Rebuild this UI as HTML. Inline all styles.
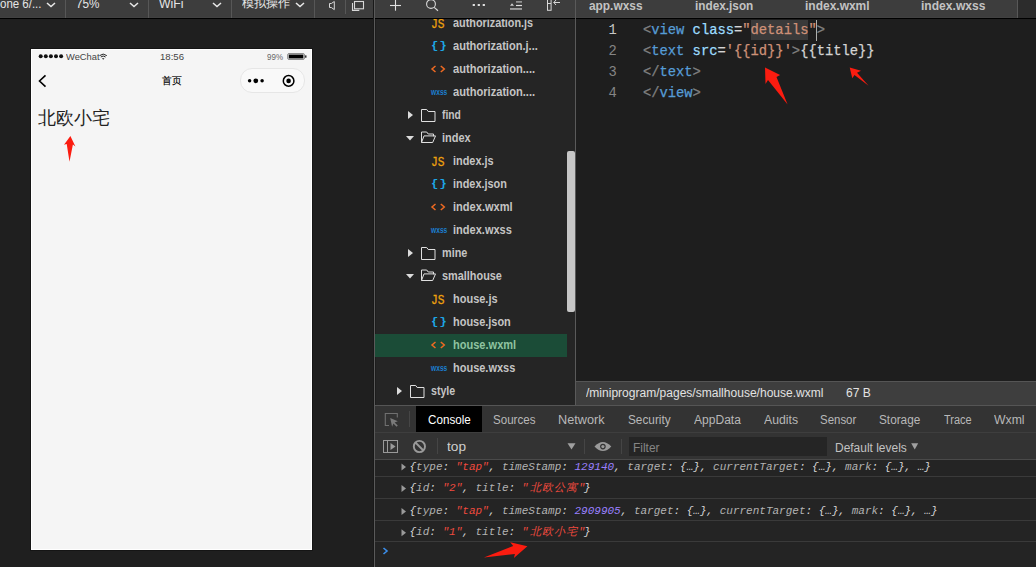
<!DOCTYPE html>
<html><head><meta charset="utf-8"><title>WeChat DevTools</title>
<style>
html,body{margin:0;padding:0;}
body{width:1036px;height:567px;overflow:hidden;position:relative;background:#1e1e1e;font-family:'Liberation Sans', sans-serif;}
svg{position:absolute;left:0;top:0;overflow:visible;}
</style></head><body>
<div style="position:absolute;left:0px;top:0px;width:374px;height:18px;background:#3d3d3d;"></div>
<div style="position:absolute;left:0px;top:17px;width:1036px;height:1px;background:#414141;"></div>
<div style="position:absolute;left:0px;top:18px;width:1036px;height:1px;background:#000000;"></div>
<div style="position:absolute;left:0px;top:19px;width:373px;height:548px;background:#1f1f1f;"></div>
<div style="position:absolute;left:373px;top:0px;width:1px;height:567px;background:#191919;"></div>
<div style="position:absolute;left:374px;top:0px;width:1px;height:567px;background:#5a5a5a;"></div>
<div style="position:absolute;left:375px;top:19px;width:1px;height:386px;background:#1d1d1d;"></div>
<div style="position:absolute;left:375px;top:0px;width:200px;height:17px;background:#3d3d3d;"></div>
<div style="position:absolute;left:376px;top:19px;width:199px;height:386px;background:#252525;"></div>
<div style="position:absolute;left:575px;top:0px;width:1px;height:405px;background:#5a5a5a;"></div>
<div style="position:absolute;left:576px;top:0px;width:441px;height:17px;background:#3d3d3d;"></div>
<div style="position:absolute;left:1017px;top:0px;width:1px;height:18px;background:#585858;"></div>
<div style="position:absolute;left:1018px;top:0px;width:18px;height:18px;background:#2c2c2c;"></div>
<div style="position:absolute;left:576px;top:19px;width:460px;height:362px;background:#1e1e1e;"></div>
<div style="position:absolute;left:576px;top:381px;width:460px;height:1px;background:#555555;"></div>
<div style="position:absolute;left:576px;top:382px;width:460px;height:23px;background:#3e3e3e;"></div>
<div style="position:absolute;left:375px;top:405px;width:661px;height:1px;background:#555555;"></div>
<div style="position:absolute;left:375px;top:406px;width:661px;height:26px;background:#333333;"></div>
<div style="position:absolute;left:416px;top:406px;width:66px;height:26px;background:#000000;"></div>
<div style="position:absolute;left:375px;top:432px;width:661px;height:1px;background:#3e3e3e;"></div>
<div style="position:absolute;left:375px;top:433px;width:661px;height:26px;background:#333333;"></div>
<div style="position:absolute;left:375px;top:459px;width:661px;height:1px;background:#4a4a4a;"></div>
<div style="position:absolute;left:375px;top:460px;width:661px;height:107px;background:#242424;"></div>
<div style="position:absolute;left:375px;top:476px;width:661px;height:1px;background:#3a3a3a;"></div>
<div style="position:absolute;left:375px;top:498px;width:661px;height:1px;background:#3a3a3a;"></div>
<div style="position:absolute;left:375px;top:520px;width:661px;height:1px;background:#3a3a3a;"></div>
<div style="position:absolute;left:375px;top:541px;width:661px;height:1px;background:#3a3a3a;"></div>
<div style="position:absolute;left:30px;top:48px;width:283px;height:503px;background:#151515;"></div>
<div style="position:absolute;left:31px;top:49px;width:281px;height:501px;background:#ffffff;"></div>
<div style="position:absolute;left:32px;top:50px;width:279px;height:499px;background:#f5f5f5;"></div>
<div style="position:absolute;left:65px;top:0px;width:1px;height:18px;background:#575757;"></div>
<div style="position:absolute;left:148px;top:0px;width:1px;height:18px;background:#575757;"></div>
<div style="position:absolute;left:231px;top:0px;width:1px;height:18px;background:#575757;"></div>
<div style="position:absolute;left:314px;top:0px;width:1px;height:18px;background:#575757;"></div>
<div style="position:absolute;left:345px;top:0px;width:1px;height:14px;background:#575757;"></div>
<div style="position:absolute;left:375px;top:334px;width:192px;height:23px;background:#1b4c37;"></div>
<div style="position:absolute;left:567px;top:151px;width:8px;height:161px;background:#c6c6c6;border-radius:2px;"></div>
<div style="position:absolute;left:750.5px;top:19.5px;width:57.9px;height:20.5px;background:#3a3a3a;"></div>
<div style="position:absolute;left:815.5px;top:19.5px;width:1.6px;height:21px;background:#aeafad;"></div>
<div style="position:absolute;left:409px;top:411px;width:1px;height:16px;background:#464646;"></div>
<div style="position:absolute;left:437px;top:438px;width:1px;height:16px;background:#454545;"></div>
<div style="position:absolute;left:584px;top:438.5px;width:1px;height:15.5px;background:#454545;"></div>
<div style="position:absolute;left:621px;top:438.5px;width:1px;height:15.5px;background:#454545;"></div>
<div style="position:absolute;left:629px;top:437px;width:198px;height:19px;background:#252525;"></div>
<div style="position:absolute;left:240px;top:68px;width:63px;height:23px;border:0.8px solid #e6e6e6;border-radius:12px;background:#f9f9f9;"></div>
<div style="position:absolute;left:-0.5px;top:-2.36px;line-height:12px;white-space:pre;color:#e6e6e6;font-family:'Liberation Sans', sans-serif;font-weight:normal;font-style:normal;font-size:12px;transform:scaleX(0.9568);transform-origin:0 0;">one 6/...</div>
<div style="position:absolute;left:76.3px;top:-2.36px;line-height:12px;white-space:pre;color:#e6e6e6;font-family:'Liberation Sans', sans-serif;font-weight:normal;font-style:normal;font-size:12px;transform:scaleX(0.9779);transform-origin:0 0;">75%</div>
<div style="position:absolute;left:159.3px;top:-2.36px;line-height:12px;white-space:pre;color:#e6e6e6;font-family:'Liberation Sans', sans-serif;font-weight:normal;font-style:normal;font-size:12px;transform:scaleX(1.0208);transform-origin:0 0;">WiFi</div>
<div style="position:absolute;left:241.5px;top:-2.86px;line-height:12px;white-space:pre;color:#e6e6e6;font-family:'Liberation Sans', sans-serif;font-weight:normal;font-style:normal;font-size:12px;transform:scaleX(1.0104);transform-origin:0 0;">模拟操作</div>
<div style="position:absolute;left:452.5px;top:16.00px;line-height:13px;white-space:pre;color:#c4c4c4;font-family:'Liberation Sans', sans-serif;font-weight:bold;font-style:normal;font-size:13px;transform:scaleX(0.8338);transform-origin:0 0;">authorization.js</div>
<div style="position:absolute;left:431.0px;top:18.25px;line-height:13.5px;white-space:pre;color:#eea20e;font-family:'Liberation Mono', monospace;font-weight:normal;font-style:normal;font-size:13.5px;transform:scaleX(0.8332);transform-origin:0 0;-webkit-text-stroke:0.3px #eea20e;">JS</div>
<div style="position:absolute;left:452.5px;top:39.00px;line-height:13px;white-space:pre;color:#c4c4c4;font-family:'Liberation Sans', sans-serif;font-weight:bold;font-style:normal;font-size:13px;transform:scaleX(0.8508);transform-origin:0 0;">authorization.j...</div>
<div style="position:absolute;left:430.8px;top:40.29px;line-height:11.5px;white-space:pre;color:#1da7e6;font-family:'Liberation Mono', monospace;font-weight:bold;font-style:normal;font-size:11.5px;transform:scaleX(1.0570);transform-origin:0 0;letter-spacing:1.2px;">{}</div>
<div style="position:absolute;left:452.5px;top:62.00px;line-height:13px;white-space:pre;color:#c4c4c4;font-family:'Liberation Sans', sans-serif;font-weight:bold;font-style:normal;font-size:13px;transform:scaleX(0.8547);transform-origin:0 0;">authorization....</div>
<div style="position:absolute;left:452.5px;top:85.00px;line-height:13px;white-space:pre;color:#c4c4c4;font-family:'Liberation Sans', sans-serif;font-weight:bold;font-style:normal;font-size:13px;transform:scaleX(0.8547);transform-origin:0 0;">authorization....</div>
<div style="position:absolute;left:430.8px;top:87.80px;line-height:8.5px;white-space:pre;color:#1b7fd1;font-family:'Liberation Sans', sans-serif;font-weight:bold;font-style:normal;font-size:8.5px;transform:scaleX(0.7838);transform-origin:0 0;">wxss</div>
<div style="position:absolute;left:441.5px;top:108.00px;line-height:13px;white-space:pre;color:#c4c4c4;font-family:'Liberation Sans', sans-serif;font-weight:bold;font-style:normal;font-size:13px;transform:scaleX(0.7932);transform-origin:0 0;">find</div>
<div style="position:absolute;left:441.5px;top:131.00px;line-height:13px;white-space:pre;color:#c4c4c4;font-family:'Liberation Sans', sans-serif;font-weight:bold;font-style:normal;font-size:13px;transform:scaleX(0.8449);transform-origin:0 0;">index</div>
<div style="position:absolute;left:452.5px;top:154.00px;line-height:13px;white-space:pre;color:#c4c4c4;font-family:'Liberation Sans', sans-serif;font-weight:bold;font-style:normal;font-size:13px;transform:scaleX(0.8385);transform-origin:0 0;">index.js</div>
<div style="position:absolute;left:431.0px;top:156.25px;line-height:13.5px;white-space:pre;color:#eea20e;font-family:'Liberation Mono', monospace;font-weight:normal;font-style:normal;font-size:13.5px;transform:scaleX(0.8332);transform-origin:0 0;-webkit-text-stroke:0.3px #eea20e;">JS</div>
<div style="position:absolute;left:452.5px;top:177.00px;line-height:13px;white-space:pre;color:#c4c4c4;font-family:'Liberation Sans', sans-serif;font-weight:bold;font-style:normal;font-size:13px;transform:scaleX(0.8383);transform-origin:0 0;">index.json</div>
<div style="position:absolute;left:430.8px;top:178.29px;line-height:11.5px;white-space:pre;color:#1da7e6;font-family:'Liberation Mono', monospace;font-weight:bold;font-style:normal;font-size:11.5px;transform:scaleX(1.0570);transform-origin:0 0;letter-spacing:1.2px;">{}</div>
<div style="position:absolute;left:452.5px;top:200.00px;line-height:13px;white-space:pre;color:#c4c4c4;font-family:'Liberation Sans', sans-serif;font-weight:bold;font-style:normal;font-size:13px;transform:scaleX(0.8505);transform-origin:0 0;">index.wxml</div>
<div style="position:absolute;left:452.5px;top:223.00px;line-height:13px;white-space:pre;color:#c4c4c4;font-family:'Liberation Sans', sans-serif;font-weight:bold;font-style:normal;font-size:13px;transform:scaleX(0.8490);transform-origin:0 0;">index.wxss</div>
<div style="position:absolute;left:430.8px;top:225.80px;line-height:8.5px;white-space:pre;color:#1b7fd1;font-family:'Liberation Sans', sans-serif;font-weight:bold;font-style:normal;font-size:8.5px;transform:scaleX(0.7838);transform-origin:0 0;">wxss</div>
<div style="position:absolute;left:441.5px;top:246.00px;line-height:13px;white-space:pre;color:#c4c4c4;font-family:'Liberation Sans', sans-serif;font-weight:bold;font-style:normal;font-size:13px;transform:scaleX(0.8338);transform-origin:0 0;">mine</div>
<div style="position:absolute;left:441.5px;top:269.00px;line-height:13px;white-space:pre;color:#c4c4c4;font-family:'Liberation Sans', sans-serif;font-weight:bold;font-style:normal;font-size:13px;transform:scaleX(0.8374);transform-origin:0 0;">smallhouse</div>
<div style="position:absolute;left:452.5px;top:292.00px;line-height:13px;white-space:pre;color:#c4c4c4;font-family:'Liberation Sans', sans-serif;font-weight:bold;font-style:normal;font-size:13px;transform:scaleX(0.8455);transform-origin:0 0;">house.js</div>
<div style="position:absolute;left:431.0px;top:294.25px;line-height:13.5px;white-space:pre;color:#eea20e;font-family:'Liberation Mono', monospace;font-weight:normal;font-style:normal;font-size:13.5px;transform:scaleX(0.8332);transform-origin:0 0;-webkit-text-stroke:0.3px #eea20e;">JS</div>
<div style="position:absolute;left:452.5px;top:315.00px;line-height:13px;white-space:pre;color:#c4c4c4;font-family:'Liberation Sans', sans-serif;font-weight:bold;font-style:normal;font-size:13px;transform:scaleX(0.8423);transform-origin:0 0;">house.json</div>
<div style="position:absolute;left:430.8px;top:316.29px;line-height:11.5px;white-space:pre;color:#1da7e6;font-family:'Liberation Mono', monospace;font-weight:bold;font-style:normal;font-size:11.5px;transform:scaleX(1.0570);transform-origin:0 0;letter-spacing:1.2px;">{}</div>
<div style="position:absolute;left:452.5px;top:338.00px;line-height:13px;white-space:pre;color:#8fc3a0;font-family:'Liberation Sans', sans-serif;font-weight:bold;font-style:normal;font-size:13px;transform:scaleX(0.8492);transform-origin:0 0;">house.wxml</div>
<div style="position:absolute;left:452.5px;top:361.00px;line-height:13px;white-space:pre;color:#c4c4c4;font-family:'Liberation Sans', sans-serif;font-weight:bold;font-style:normal;font-size:13px;transform:scaleX(0.8453);transform-origin:0 0;">house.wxss</div>
<div style="position:absolute;left:430.8px;top:363.80px;line-height:8.5px;white-space:pre;color:#1b7fd1;font-family:'Liberation Sans', sans-serif;font-weight:bold;font-style:normal;font-size:8.5px;transform:scaleX(0.7838);transform-origin:0 0;">wxss</div>
<div style="position:absolute;left:430.5px;top:384.00px;line-height:13px;white-space:pre;color:#c4c4c4;font-family:'Liberation Sans', sans-serif;font-weight:bold;font-style:normal;font-size:13px;transform:scaleX(0.8164);transform-origin:0 0;">style</div>
<div style="position:absolute;left:588.5px;top:-0.70px;line-height:13px;white-space:pre;color:#c3c3c3;font-family:'Liberation Sans', sans-serif;font-weight:bold;font-style:normal;font-size:13px;transform:scaleX(0.9140);transform-origin:0 0;">app.wxss</div>
<div style="position:absolute;left:695px;top:-0.70px;line-height:13px;white-space:pre;color:#c3c3c3;font-family:'Liberation Sans', sans-serif;font-weight:bold;font-style:normal;font-size:13px;transform:scaleX(0.9067);transform-origin:0 0;">index.json</div>
<div style="position:absolute;left:805.2px;top:-0.70px;line-height:13px;white-space:pre;color:#c3c3c3;font-family:'Liberation Sans', sans-serif;font-weight:bold;font-style:normal;font-size:13px;transform:scaleX(0.9218);transform-origin:0 0;">index.wxml</div>
<div style="position:absolute;left:921.4px;top:-0.70px;line-height:13px;white-space:pre;color:#c3c3c3;font-family:'Liberation Sans', sans-serif;font-weight:bold;font-style:normal;font-size:13px;transform:scaleX(0.9297);transform-origin:0 0;">index.wxss</div>
<div style="position:absolute;left:643px;top:24.42px;line-height:13.8px;white-space:pre;color:#808080;font-family:'Liberation Mono', monospace;font-weight:normal;font-style:normal;font-size:13.8px;-webkit-text-stroke:0.25px #808080;">&lt;</div>
<div style="position:absolute;left:651.27px;top:24.42px;line-height:13.8px;white-space:pre;color:#569cd6;font-family:'Liberation Mono', monospace;font-weight:normal;font-style:normal;font-size:13.8px;-webkit-text-stroke:0.25px #569cd6;">view</div>
<div style="position:absolute;left:684.35px;top:24.42px;line-height:13.8px;white-space:pre;color:#d4d4d4;font-family:'Liberation Mono', monospace;font-weight:normal;font-style:normal;font-size:13.8px;-webkit-text-stroke:0.25px #d4d4d4;"> </div>
<div style="position:absolute;left:692.62px;top:24.42px;line-height:13.8px;white-space:pre;color:#9cdcfe;font-family:'Liberation Mono', monospace;font-weight:normal;font-style:normal;font-size:13.8px;-webkit-text-stroke:0.25px #9cdcfe;">class</div>
<div style="position:absolute;left:733.97px;top:24.42px;line-height:13.8px;white-space:pre;color:#d4d4d4;font-family:'Liberation Mono', monospace;font-weight:normal;font-style:normal;font-size:13.8px;-webkit-text-stroke:0.25px #d4d4d4;">=</div>
<div style="position:absolute;left:742.24px;top:24.42px;line-height:13.8px;white-space:pre;color:#ce9178;font-family:'Liberation Mono', monospace;font-weight:normal;font-style:normal;font-size:13.8px;-webkit-text-stroke:0.25px #ce9178;">&quot;details&quot;</div>
<div style="position:absolute;left:816.67px;top:24.42px;line-height:13.8px;white-space:pre;color:#808080;font-family:'Liberation Mono', monospace;font-weight:normal;font-style:normal;font-size:13.8px;-webkit-text-stroke:0.25px #808080;">&gt;</div>
<div style="position:absolute;left:643px;top:45.42px;line-height:13.8px;white-space:pre;color:#808080;font-family:'Liberation Mono', monospace;font-weight:normal;font-style:normal;font-size:13.8px;-webkit-text-stroke:0.25px #808080;">&lt;</div>
<div style="position:absolute;left:651.27px;top:45.42px;line-height:13.8px;white-space:pre;color:#569cd6;font-family:'Liberation Mono', monospace;font-weight:normal;font-style:normal;font-size:13.8px;-webkit-text-stroke:0.25px #569cd6;">text</div>
<div style="position:absolute;left:684.35px;top:45.42px;line-height:13.8px;white-space:pre;color:#d4d4d4;font-family:'Liberation Mono', monospace;font-weight:normal;font-style:normal;font-size:13.8px;-webkit-text-stroke:0.25px #d4d4d4;"> </div>
<div style="position:absolute;left:692.62px;top:45.42px;line-height:13.8px;white-space:pre;color:#9cdcfe;font-family:'Liberation Mono', monospace;font-weight:normal;font-style:normal;font-size:13.8px;-webkit-text-stroke:0.25px #9cdcfe;">src</div>
<div style="position:absolute;left:717.43px;top:45.42px;line-height:13.8px;white-space:pre;color:#d4d4d4;font-family:'Liberation Mono', monospace;font-weight:normal;font-style:normal;font-size:13.8px;-webkit-text-stroke:0.25px #d4d4d4;">=</div>
<div style="position:absolute;left:725.6999999999999px;top:45.42px;line-height:13.8px;white-space:pre;color:#ce9178;font-family:'Liberation Mono', monospace;font-weight:normal;font-style:normal;font-size:13.8px;-webkit-text-stroke:0.25px #ce9178;">&#x27;{{id}}&#x27;</div>
<div style="position:absolute;left:791.8599999999999px;top:45.42px;line-height:13.8px;white-space:pre;color:#808080;font-family:'Liberation Mono', monospace;font-weight:normal;font-style:normal;font-size:13.8px;-webkit-text-stroke:0.25px #808080;">&gt;</div>
<div style="position:absolute;left:800.1299999999999px;top:45.42px;line-height:13.8px;white-space:pre;color:#d4d4d4;font-family:'Liberation Mono', monospace;font-weight:normal;font-style:normal;font-size:13.8px;-webkit-text-stroke:0.25px #d4d4d4;">{{title}}</div>
<div style="position:absolute;left:643px;top:66.42px;line-height:13.8px;white-space:pre;color:#808080;font-family:'Liberation Mono', monospace;font-weight:normal;font-style:normal;font-size:13.8px;-webkit-text-stroke:0.25px #808080;">&lt;/</div>
<div style="position:absolute;left:659.54px;top:66.42px;line-height:13.8px;white-space:pre;color:#569cd6;font-family:'Liberation Mono', monospace;font-weight:normal;font-style:normal;font-size:13.8px;-webkit-text-stroke:0.25px #569cd6;">text</div>
<div style="position:absolute;left:692.62px;top:66.42px;line-height:13.8px;white-space:pre;color:#808080;font-family:'Liberation Mono', monospace;font-weight:normal;font-style:normal;font-size:13.8px;-webkit-text-stroke:0.25px #808080;">&gt;</div>
<div style="position:absolute;left:643px;top:87.42px;line-height:13.8px;white-space:pre;color:#808080;font-family:'Liberation Mono', monospace;font-weight:normal;font-style:normal;font-size:13.8px;-webkit-text-stroke:0.25px #808080;">&lt;/</div>
<div style="position:absolute;left:659.54px;top:87.42px;line-height:13.8px;white-space:pre;color:#569cd6;font-family:'Liberation Mono', monospace;font-weight:normal;font-style:normal;font-size:13.8px;-webkit-text-stroke:0.25px #569cd6;">view</div>
<div style="position:absolute;left:692.62px;top:87.42px;line-height:13.8px;white-space:pre;color:#808080;font-family:'Liberation Mono', monospace;font-weight:normal;font-style:normal;font-size:13.8px;-webkit-text-stroke:0.25px #808080;">&gt;</div>
<div style="position:absolute;left:608.5px;top:24.42px;line-height:13.8px;white-space:pre;color:#c6c6c6;font-family:'Liberation Mono', monospace;font-weight:normal;font-style:normal;font-size:13.8px;">1</div>
<div style="position:absolute;left:608.5px;top:45.42px;line-height:13.8px;white-space:pre;color:#858585;font-family:'Liberation Mono', monospace;font-weight:normal;font-style:normal;font-size:13.8px;">2</div>
<div style="position:absolute;left:608.5px;top:66.42px;line-height:13.8px;white-space:pre;color:#858585;font-family:'Liberation Mono', monospace;font-weight:normal;font-style:normal;font-size:13.8px;">3</div>
<div style="position:absolute;left:608.5px;top:87.42px;line-height:13.8px;white-space:pre;color:#858585;font-family:'Liberation Mono', monospace;font-weight:normal;font-style:normal;font-size:13.8px;">4</div>
<div style="position:absolute;left:585.5px;top:386.84px;line-height:12px;white-space:pre;color:#e2e2e2;font-family:'Liberation Sans', sans-serif;font-weight:normal;font-style:normal;font-size:12px;transform:scaleX(1.0030);transform-origin:0 0;">/miniprogram/pages/smallhouse/house.wxml</div>
<div style="position:absolute;left:846.2px;top:386.84px;line-height:12px;white-space:pre;color:#e2e2e2;font-family:'Liberation Sans', sans-serif;font-weight:normal;font-style:normal;font-size:12px;transform:scaleX(1.0046);transform-origin:0 0;">67 B</div>
<div style="position:absolute;left:427.5px;top:414.42px;line-height:12.5px;white-space:pre;color:#ffffff;font-family:'Liberation Sans', sans-serif;font-weight:normal;font-style:normal;font-size:12.5px;transform:scaleX(0.9330);transform-origin:0 0;">Console</div>
<div style="position:absolute;left:493.0px;top:414.42px;line-height:12.5px;white-space:pre;color:#b8b8b8;font-family:'Liberation Sans', sans-serif;font-weight:normal;font-style:normal;font-size:12.5px;transform:scaleX(0.9267);transform-origin:0 0;">Sources</div>
<div style="position:absolute;left:558.0px;top:414.42px;line-height:12.5px;white-space:pre;color:#b8b8b8;font-family:'Liberation Sans', sans-serif;font-weight:normal;font-style:normal;font-size:12.5px;transform:scaleX(1.0143);transform-origin:0 0;">Network</div>
<div style="position:absolute;left:627.5px;top:414.42px;line-height:12.5px;white-space:pre;color:#b8b8b8;font-family:'Liberation Sans', sans-serif;font-weight:normal;font-style:normal;font-size:12.5px;transform:scaleX(0.9434);transform-origin:0 0;">Security</div>
<div style="position:absolute;left:693.5px;top:414.42px;line-height:12.5px;white-space:pre;color:#b8b8b8;font-family:'Liberation Sans', sans-serif;font-weight:normal;font-style:normal;font-size:12.5px;transform:scaleX(0.9639);transform-origin:0 0;">AppData</div>
<div style="position:absolute;left:763.5px;top:414.42px;line-height:12.5px;white-space:pre;color:#b8b8b8;font-family:'Liberation Sans', sans-serif;font-weight:normal;font-style:normal;font-size:12.5px;transform:scaleX(0.9784);transform-origin:0 0;">Audits</div>
<div style="position:absolute;left:820.1px;top:414.42px;line-height:12.5px;white-space:pre;color:#b8b8b8;font-family:'Liberation Sans', sans-serif;font-weight:normal;font-style:normal;font-size:12.5px;transform:scaleX(0.9164);transform-origin:0 0;">Sensor</div>
<div style="position:absolute;left:879.4px;top:414.42px;line-height:12.5px;white-space:pre;color:#b8b8b8;font-family:'Liberation Sans', sans-serif;font-weight:normal;font-style:normal;font-size:12.5px;transform:scaleX(0.9433);transform-origin:0 0;">Storage</div>
<div style="position:absolute;left:943.9px;top:414.42px;line-height:12.5px;white-space:pre;color:#b8b8b8;font-family:'Liberation Sans', sans-serif;font-weight:normal;font-style:normal;font-size:12.5px;transform:scaleX(0.8762);transform-origin:0 0;">Trace</div>
<div style="position:absolute;left:994.3px;top:414.42px;line-height:12.5px;white-space:pre;color:#b8b8b8;font-family:'Liberation Sans', sans-serif;font-weight:normal;font-style:normal;font-size:12.5px;transform:scaleX(0.9792);transform-origin:0 0;">Wxml</div>
<div style="position:absolute;left:446.5px;top:441.22px;line-height:12.5px;white-space:pre;color:#cfcfcf;font-family:'Liberation Sans', sans-serif;font-weight:normal;font-style:normal;font-size:12.5px;transform:scaleX(1.0925);transform-origin:0 0;">top</div>
<div style="position:absolute;left:633px;top:441.72px;line-height:12.5px;white-space:pre;color:#858585;font-family:'Liberation Sans', sans-serif;font-weight:normal;font-style:normal;font-size:12.5px;transform:scaleX(0.9539);transform-origin:0 0;">Filter</div>
<div style="position:absolute;left:835px;top:441.62px;line-height:12.5px;white-space:pre;color:#c2c2c2;font-family:'Liberation Sans', sans-serif;font-weight:normal;font-style:normal;font-size:12.5px;transform:scaleX(0.9567);transform-origin:0 0;">Default levels</div>
<div style="position:absolute;left:409.5px;top:461.57px;line-height:11px;white-space:pre;color:#d6d6d6;font-family:'Liberation Mono', monospace;font-weight:normal;font-style:italic;font-size:11px;">{</div>
<div style="position:absolute;left:416.1px;top:461.57px;line-height:11px;white-space:pre;color:#b3b3b3;font-family:'Liberation Mono', monospace;font-weight:normal;font-style:italic;font-size:11px;">type</div>
<div style="position:absolute;left:442.5px;top:461.57px;line-height:11px;white-space:pre;color:#d6d6d6;font-family:'Liberation Mono', monospace;font-weight:normal;font-style:italic;font-size:11px;">: </div>
<div style="position:absolute;left:455.7px;top:461.57px;line-height:11px;white-space:pre;color:#ef4a3e;font-family:'Liberation Mono', monospace;font-weight:normal;font-style:italic;font-size:11px;">&quot;tap&quot;</div>
<div style="position:absolute;left:488.7px;top:461.57px;line-height:11px;white-space:pre;color:#d6d6d6;font-family:'Liberation Mono', monospace;font-weight:normal;font-style:italic;font-size:11px;">, </div>
<div style="position:absolute;left:501.9px;top:461.57px;line-height:11px;white-space:pre;color:#b3b3b3;font-family:'Liberation Mono', monospace;font-weight:normal;font-style:italic;font-size:11px;">timeStamp</div>
<div style="position:absolute;left:561.3px;top:461.57px;line-height:11px;white-space:pre;color:#d6d6d6;font-family:'Liberation Mono', monospace;font-weight:normal;font-style:italic;font-size:11px;">: </div>
<div style="position:absolute;left:574.5px;top:461.57px;line-height:11px;white-space:pre;color:#9a80ff;font-family:'Liberation Mono', monospace;font-weight:normal;font-style:italic;font-size:11px;">129140</div>
<div style="position:absolute;left:614.1px;top:461.57px;line-height:11px;white-space:pre;color:#d6d6d6;font-family:'Liberation Mono', monospace;font-weight:normal;font-style:italic;font-size:11px;">, </div>
<div style="position:absolute;left:627.3000000000001px;top:461.57px;line-height:11px;white-space:pre;color:#b3b3b3;font-family:'Liberation Mono', monospace;font-weight:normal;font-style:italic;font-size:11px;">target</div>
<div style="position:absolute;left:666.9000000000001px;top:461.57px;line-height:11px;white-space:pre;color:#d6d6d6;font-family:'Liberation Mono', monospace;font-weight:normal;font-style:italic;font-size:11px;">: </div>
<div style="position:absolute;left:680.1000000000001px;top:461.57px;line-height:11px;white-space:pre;color:#d6d6d6;font-family:'Liberation Mono', monospace;font-weight:normal;font-style:italic;font-size:11px;">{…}</div>
<div style="position:absolute;left:699.9000000000001px;top:461.57px;line-height:11px;white-space:pre;color:#d6d6d6;font-family:'Liberation Mono', monospace;font-weight:normal;font-style:italic;font-size:11px;">, </div>
<div style="position:absolute;left:713.1000000000001px;top:461.57px;line-height:11px;white-space:pre;color:#b3b3b3;font-family:'Liberation Mono', monospace;font-weight:normal;font-style:italic;font-size:11px;">currentTarget</div>
<div style="position:absolute;left:798.9000000000001px;top:461.57px;line-height:11px;white-space:pre;color:#d6d6d6;font-family:'Liberation Mono', monospace;font-weight:normal;font-style:italic;font-size:11px;">: </div>
<div style="position:absolute;left:812.1000000000001px;top:461.57px;line-height:11px;white-space:pre;color:#d6d6d6;font-family:'Liberation Mono', monospace;font-weight:normal;font-style:italic;font-size:11px;">{…}</div>
<div style="position:absolute;left:831.9000000000001px;top:461.57px;line-height:11px;white-space:pre;color:#d6d6d6;font-family:'Liberation Mono', monospace;font-weight:normal;font-style:italic;font-size:11px;">, </div>
<div style="position:absolute;left:845.1000000000001px;top:461.57px;line-height:11px;white-space:pre;color:#b3b3b3;font-family:'Liberation Mono', monospace;font-weight:normal;font-style:italic;font-size:11px;">mark</div>
<div style="position:absolute;left:871.5000000000001px;top:461.57px;line-height:11px;white-space:pre;color:#d6d6d6;font-family:'Liberation Mono', monospace;font-weight:normal;font-style:italic;font-size:11px;">: </div>
<div style="position:absolute;left:884.7000000000002px;top:461.57px;line-height:11px;white-space:pre;color:#d6d6d6;font-family:'Liberation Mono', monospace;font-weight:normal;font-style:italic;font-size:11px;">{…}</div>
<div style="position:absolute;left:904.5000000000001px;top:461.57px;line-height:11px;white-space:pre;color:#d6d6d6;font-family:'Liberation Mono', monospace;font-weight:normal;font-style:italic;font-size:11px;">, …}</div>
<div style="position:absolute;left:409.5px;top:483.07px;line-height:11px;white-space:pre;color:#d6d6d6;font-family:'Liberation Mono', monospace;font-weight:normal;font-style:italic;font-size:11px;">{</div>
<div style="position:absolute;left:416.1px;top:483.07px;line-height:11px;white-space:pre;color:#b3b3b3;font-family:'Liberation Mono', monospace;font-weight:normal;font-style:italic;font-size:11px;">id</div>
<div style="position:absolute;left:429.3px;top:483.07px;line-height:11px;white-space:pre;color:#d6d6d6;font-family:'Liberation Mono', monospace;font-weight:normal;font-style:italic;font-size:11px;">: </div>
<div style="position:absolute;left:442.5px;top:483.07px;line-height:11px;white-space:pre;color:#ef4a3e;font-family:'Liberation Mono', monospace;font-weight:normal;font-style:italic;font-size:11px;">&quot;2&quot;</div>
<div style="position:absolute;left:462.3px;top:483.07px;line-height:11px;white-space:pre;color:#d6d6d6;font-family:'Liberation Mono', monospace;font-weight:normal;font-style:italic;font-size:11px;">, </div>
<div style="position:absolute;left:475.5px;top:483.07px;line-height:11px;white-space:pre;color:#b3b3b3;font-family:'Liberation Mono', monospace;font-weight:normal;font-style:italic;font-size:11px;">title</div>
<div style="position:absolute;left:508.5px;top:483.07px;line-height:11px;white-space:pre;color:#d6d6d6;font-family:'Liberation Mono', monospace;font-weight:normal;font-style:italic;font-size:11px;">: </div>
<div style="position:absolute;left:521.7px;top:483.07px;line-height:11px;white-space:pre;color:#ef4a3e;font-family:'Liberation Mono', monospace;font-weight:normal;font-style:italic;font-size:11px;letter-spacing:1.25px;">&quot;北欧公寓&quot;</div>
<div style="position:absolute;left:583.9000000000001px;top:483.07px;line-height:11px;white-space:pre;color:#d6d6d6;font-family:'Liberation Mono', monospace;font-weight:normal;font-style:italic;font-size:11px;">}</div>
<div style="position:absolute;left:409.5px;top:506.07px;line-height:11px;white-space:pre;color:#d6d6d6;font-family:'Liberation Mono', monospace;font-weight:normal;font-style:italic;font-size:11px;">{</div>
<div style="position:absolute;left:416.1px;top:506.07px;line-height:11px;white-space:pre;color:#b3b3b3;font-family:'Liberation Mono', monospace;font-weight:normal;font-style:italic;font-size:11px;">type</div>
<div style="position:absolute;left:442.5px;top:506.07px;line-height:11px;white-space:pre;color:#d6d6d6;font-family:'Liberation Mono', monospace;font-weight:normal;font-style:italic;font-size:11px;">: </div>
<div style="position:absolute;left:455.7px;top:506.07px;line-height:11px;white-space:pre;color:#ef4a3e;font-family:'Liberation Mono', monospace;font-weight:normal;font-style:italic;font-size:11px;">&quot;tap&quot;</div>
<div style="position:absolute;left:488.7px;top:506.07px;line-height:11px;white-space:pre;color:#d6d6d6;font-family:'Liberation Mono', monospace;font-weight:normal;font-style:italic;font-size:11px;">, </div>
<div style="position:absolute;left:501.9px;top:506.07px;line-height:11px;white-space:pre;color:#b3b3b3;font-family:'Liberation Mono', monospace;font-weight:normal;font-style:italic;font-size:11px;">timeStamp</div>
<div style="position:absolute;left:561.3px;top:506.07px;line-height:11px;white-space:pre;color:#d6d6d6;font-family:'Liberation Mono', monospace;font-weight:normal;font-style:italic;font-size:11px;">: </div>
<div style="position:absolute;left:574.5px;top:506.07px;line-height:11px;white-space:pre;color:#9a80ff;font-family:'Liberation Mono', monospace;font-weight:normal;font-style:italic;font-size:11px;">2909905</div>
<div style="position:absolute;left:620.7px;top:506.07px;line-height:11px;white-space:pre;color:#d6d6d6;font-family:'Liberation Mono', monospace;font-weight:normal;font-style:italic;font-size:11px;">, </div>
<div style="position:absolute;left:633.9000000000001px;top:506.07px;line-height:11px;white-space:pre;color:#b3b3b3;font-family:'Liberation Mono', monospace;font-weight:normal;font-style:italic;font-size:11px;">target</div>
<div style="position:absolute;left:673.5000000000001px;top:506.07px;line-height:11px;white-space:pre;color:#d6d6d6;font-family:'Liberation Mono', monospace;font-weight:normal;font-style:italic;font-size:11px;">: </div>
<div style="position:absolute;left:686.7000000000002px;top:506.07px;line-height:11px;white-space:pre;color:#d6d6d6;font-family:'Liberation Mono', monospace;font-weight:normal;font-style:italic;font-size:11px;">{…}</div>
<div style="position:absolute;left:706.5000000000001px;top:506.07px;line-height:11px;white-space:pre;color:#d6d6d6;font-family:'Liberation Mono', monospace;font-weight:normal;font-style:italic;font-size:11px;">, </div>
<div style="position:absolute;left:719.7000000000002px;top:506.07px;line-height:11px;white-space:pre;color:#b3b3b3;font-family:'Liberation Mono', monospace;font-weight:normal;font-style:italic;font-size:11px;">currentTarget</div>
<div style="position:absolute;left:805.5000000000001px;top:506.07px;line-height:11px;white-space:pre;color:#d6d6d6;font-family:'Liberation Mono', monospace;font-weight:normal;font-style:italic;font-size:11px;">: </div>
<div style="position:absolute;left:818.7000000000002px;top:506.07px;line-height:11px;white-space:pre;color:#d6d6d6;font-family:'Liberation Mono', monospace;font-weight:normal;font-style:italic;font-size:11px;">{…}</div>
<div style="position:absolute;left:838.5000000000001px;top:506.07px;line-height:11px;white-space:pre;color:#d6d6d6;font-family:'Liberation Mono', monospace;font-weight:normal;font-style:italic;font-size:11px;">, </div>
<div style="position:absolute;left:851.7000000000002px;top:506.07px;line-height:11px;white-space:pre;color:#b3b3b3;font-family:'Liberation Mono', monospace;font-weight:normal;font-style:italic;font-size:11px;">mark</div>
<div style="position:absolute;left:878.1000000000001px;top:506.07px;line-height:11px;white-space:pre;color:#d6d6d6;font-family:'Liberation Mono', monospace;font-weight:normal;font-style:italic;font-size:11px;">: </div>
<div style="position:absolute;left:891.3000000000002px;top:506.07px;line-height:11px;white-space:pre;color:#d6d6d6;font-family:'Liberation Mono', monospace;font-weight:normal;font-style:italic;font-size:11px;">{…}</div>
<div style="position:absolute;left:911.1000000000001px;top:506.07px;line-height:11px;white-space:pre;color:#d6d6d6;font-family:'Liberation Mono', monospace;font-weight:normal;font-style:italic;font-size:11px;">, …}</div>
<div style="position:absolute;left:409.5px;top:527.37px;line-height:11px;white-space:pre;color:#d6d6d6;font-family:'Liberation Mono', monospace;font-weight:normal;font-style:italic;font-size:11px;">{</div>
<div style="position:absolute;left:416.1px;top:527.37px;line-height:11px;white-space:pre;color:#b3b3b3;font-family:'Liberation Mono', monospace;font-weight:normal;font-style:italic;font-size:11px;">id</div>
<div style="position:absolute;left:429.3px;top:527.37px;line-height:11px;white-space:pre;color:#d6d6d6;font-family:'Liberation Mono', monospace;font-weight:normal;font-style:italic;font-size:11px;">: </div>
<div style="position:absolute;left:442.5px;top:527.37px;line-height:11px;white-space:pre;color:#ef4a3e;font-family:'Liberation Mono', monospace;font-weight:normal;font-style:italic;font-size:11px;">&quot;1&quot;</div>
<div style="position:absolute;left:462.3px;top:527.37px;line-height:11px;white-space:pre;color:#d6d6d6;font-family:'Liberation Mono', monospace;font-weight:normal;font-style:italic;font-size:11px;">, </div>
<div style="position:absolute;left:475.5px;top:527.37px;line-height:11px;white-space:pre;color:#b3b3b3;font-family:'Liberation Mono', monospace;font-weight:normal;font-style:italic;font-size:11px;">title</div>
<div style="position:absolute;left:508.5px;top:527.37px;line-height:11px;white-space:pre;color:#d6d6d6;font-family:'Liberation Mono', monospace;font-weight:normal;font-style:italic;font-size:11px;">: </div>
<div style="position:absolute;left:521.7px;top:527.37px;line-height:11px;white-space:pre;color:#ef4a3e;font-family:'Liberation Mono', monospace;font-weight:normal;font-style:italic;font-size:11px;letter-spacing:1.25px;">&quot;北欧小宅&quot;</div>
<div style="position:absolute;left:583.9000000000001px;top:527.37px;line-height:11px;white-space:pre;color:#d6d6d6;font-family:'Liberation Mono', monospace;font-weight:normal;font-style:italic;font-size:11px;">}</div>
<div style="position:absolute;left:66px;top:51.56px;line-height:9.5px;white-space:pre;color:#444444;font-family:'Liberation Sans', sans-serif;font-weight:normal;font-style:normal;font-size:9.5px;transform:scaleX(0.9808);transform-origin:0 0;">WeChat</div>
<div style="position:absolute;left:160px;top:51.96px;line-height:9.5px;white-space:pre;color:#444444;font-family:'Liberation Sans', sans-serif;font-weight:normal;font-style:normal;font-size:9.5px;transform:scaleX(1.0092);transform-origin:0 0;">18:56</div>
<div style="position:absolute;left:267.2px;top:52.50px;line-height:8.5px;white-space:pre;color:#666666;font-family:'Liberation Sans', sans-serif;font-weight:normal;font-style:normal;font-size:8.5px;transform:scaleX(0.9403);transform-origin:0 0;">99%</div>
<div style="position:absolute;left:161.5px;top:76.03px;line-height:10px;white-space:pre;color:#000000;font-family:'Liberation Sans', sans-serif;font-weight:normal;font-style:normal;font-size:10px;transform:scaleX(0.9750);transform-origin:0 0;-webkit-text-stroke:0.15px #000;">首页</div>
<div style="position:absolute;left:38.3px;top:109.06px;line-height:18px;white-space:pre;color:#222222;font-family:'Liberation Sans', sans-serif;font-weight:normal;font-style:normal;font-size:18px;transform:scaleX(1.0000);transform-origin:0 0;">北欧小宅</div>
<div style="position:absolute;left:375px;top:0;width:200px;height:17px;background:#3d3d3d"></div><div style="position:absolute;left:375px;top:17px;width:200px;height:1px;background:#414141"></div><div style="position:absolute;left:375px;top:18px;width:200px;height:1px;background:#000"></div>
<svg width="1036" height="567" viewBox="0 0 1036 567"><polyline points="47,3 51,6.6 55,3" fill="none" stroke="#e8e8e8" stroke-width="1.5"/><polyline points="130,3 134,6.6 138,3" fill="none" stroke="#e8e8e8" stroke-width="1.5"/><polyline points="213,3 217,6.6 221,3" fill="none" stroke="#e8e8e8" stroke-width="1.5"/><polyline points="296,3 300,6.6 304,3" fill="none" stroke="#e8e8e8" stroke-width="1.5"/><polygon points="329.5,3.5 331.3,3.5 334.3,1.5 334.3,9.6 331.3,7.5 329.5,7.5" fill="none" stroke="#d8d8d8" stroke-width="1"/><rect x="354.5" y="1.5" width="9" height="7.3" fill="none" stroke="#d8d8d8" stroke-width="1.1"/><polyline points="352.5,3 352.5,10.4 359.3,10.4" fill="none" stroke="#d8d8d8" stroke-width="1.1"/><line x1="390" y1="5.5" x2="401" y2="5.5" stroke="#e0e0e0" stroke-width="1.1"/><line x1="395.5" y1="0" x2="395.5" y2="10.7" stroke="#e0e0e0" stroke-width="1.1"/><circle cx="431" cy="4" r="4.4" fill="none" stroke="#d8d8d8" stroke-width="1.1"/><line x1="434.2" y1="7.4" x2="438" y2="10.7" stroke="#d8d8d8" stroke-width="1.2"/><rect x="472.7" y="4" width="2.2" height="2" fill="#e0e0e0"/><rect x="477.7" y="4" width="2.2" height="2" fill="#e0e0e0"/><rect x="482.7" y="4" width="2.2" height="2" fill="#e0e0e0"/><polygon points="510,5.8 512,3.2 514,5.8" fill="#d0d0d0"/><rect x="516" y="1.2" width="6" height="1.4" fill="#a8a8a8"/><rect x="516" y="4.9" width="6" height="1.2" fill="#e0e0e0"/><rect x="510" y="8.1" width="12" height="1.7" fill="#a8a8a8"/><rect x="547.5" y="-1" width="3.6" height="11.3" fill="none" stroke="#d8d8d8" stroke-width="1"/><line x1="547.5" y1="3.5" x2="551" y2="3.5" stroke="#d8d8d8" stroke-width="1"/><polyline points="556,0 553.8,2.5 556,5" fill="none" stroke="#d8d8d8" stroke-width="1"/><line x1="553.8" y1="2.5" x2="560" y2="2.5" stroke="#d8d8d8" stroke-width="1"/><polyline points="435.5,66 432,69 435.5,72" fill="none" stroke="#ef6a22" stroke-width="1.5"/><polyline points="440.8,66 444.3,69 440.8,72" fill="none" stroke="#ef6a22" stroke-width="1.5"/><polygon points="408,111 413,115 408,119" fill="#dcdcdc"/><path d="M421.5,109.5 h5.2 l1.5,2 h6.8 v10 h-13.5 z" fill="none" stroke="#e0e0e0" stroke-width="1" stroke-linejoin="round"/><polygon points="406,136 414,136 410,140.5" fill="#dcdcdc"/><path d="M421.5,142.5 v-10.5 h5.2 l1.5,2 h5.3 v2.3" fill="none" stroke="#e0e0e0" stroke-width="1" stroke-linejoin="round"/><path d="M421.5,142.5 l2.5,-6.6 h11.5 l-2.8,6.6 z" fill="none" stroke="#e0e0e0" stroke-width="1" stroke-linejoin="round"/><polyline points="435.5,204 432,207 435.5,210" fill="none" stroke="#ef6a22" stroke-width="1.5"/><polyline points="440.8,204 444.3,207 440.8,210" fill="none" stroke="#ef6a22" stroke-width="1.5"/><polygon points="408,249 413,253 408,257" fill="#dcdcdc"/><path d="M421.5,247.5 h5.2 l1.5,2 h6.8 v10 h-13.5 z" fill="none" stroke="#e0e0e0" stroke-width="1" stroke-linejoin="round"/><polygon points="406,274 414,274 410,278.5" fill="#dcdcdc"/><path d="M421.5,280.5 v-10.5 h5.2 l1.5,2 h5.3 v2.3" fill="none" stroke="#e0e0e0" stroke-width="1" stroke-linejoin="round"/><path d="M421.5,280.5 l2.5,-6.6 h11.5 l-2.8,6.6 z" fill="none" stroke="#e0e0e0" stroke-width="1" stroke-linejoin="round"/><polyline points="435.5,342 432,345 435.5,348" fill="none" stroke="#ef6a22" stroke-width="1.5"/><polyline points="440.8,342 444.3,345 440.8,348" fill="none" stroke="#ef6a22" stroke-width="1.5"/><polygon points="397,387 402,391 397,395" fill="#dcdcdc"/><path d="M410.5,385.5 h5.2 l1.5,2 h6.8 v10 h-13.5 z" fill="none" stroke="#e0e0e0" stroke-width="1" stroke-linejoin="round"/><path d="M389,425.5 h-3.7 v-12 h12 v4" fill="none" stroke="#707070" stroke-width="1.1"/><path d="M390.2,418 l7.6,3.2 l-3.2,1.2 l3.2,3.2 l-1.2,1.2 l-3.2,-3.2 l-1.3,3.2 z" fill="#7a7a7a"/><rect x="383.5" y="440.5" width="14" height="12" fill="none" stroke="#9a9a9a" stroke-width="1"/><line x1="387.5" y1="440.5" x2="387.5" y2="452.5" stroke="#9a9a9a" stroke-width="1"/><polygon points="390.5,443 395.5,446.5 390.5,450" fill="#9a9a9a"/><circle cx="419.4" cy="446.5" r="5.6" fill="none" stroke="#9a9a9a" stroke-width="1.9"/><line x1="415.4" y1="442.5" x2="423.4" y2="450.5" stroke="#9a9a9a" stroke-width="1.9"/><polygon points="567.5,443.2 575.5,443.2 571.5,449.4" fill="#a0a0a0"/><path d="M594.5,446.6 q8.3,-9 16.8,0 q-8.3,9 -16.8,0 z" fill="#9a9a9a"/><circle cx="602.9" cy="446.6" r="2.8" fill="#333333"/><circle cx="602.9" cy="446.6" r="1.6" fill="#9a9a9a"/><polygon points="911.2,443.2 918.2,443.2 914.7,449.4" fill="#a0a0a0"/><polygon points="401.5,463.5 406,467 401.5,470.5" fill="#9a9a9a"/><polygon points="401.5,485.0 406,488.5 401.5,492.0" fill="#9a9a9a"/><polygon points="401.5,508.0 406,511.5 401.5,515.0" fill="#9a9a9a"/><polygon points="401.5,529.3 406,532.8 401.5,536.3" fill="#9a9a9a"/><polyline points="383.5,548 387,551 383.5,554" fill="none" stroke="#3b8eea" stroke-width="1.6"/><circle cx="40.7" cy="56.3" r="2" fill="#111"/><circle cx="45.800000000000004" cy="56.3" r="2" fill="#111"/><circle cx="50.900000000000006" cy="56.3" r="2" fill="#111"/><circle cx="56.0" cy="56.3" r="2" fill="#111"/><circle cx="61.1" cy="56.3" r="2" fill="#111"/><path d="M99.6,55.6 q3.6,-3 7.2,0" fill="none" stroke="#222" stroke-width="1"/><path d="M100.8,57 q2.4,-2 4.8,0" fill="none" stroke="#222" stroke-width="1"/><polygon points="101.9,58.2 104.5,58.2 103.2,59.7" fill="#222"/><rect x="287.8" y="53.7" width="16.5" height="5.6" rx="0.8" fill="none" stroke="#555" stroke-width="0.8"/><rect x="288.8" y="54.6" width="14.5" height="3.8" fill="#000"/><rect x="305" y="55.4" width="1.5" height="2.3" fill="#333"/><polyline points="45.5,75.3 39.5,81 45.5,86.7" fill="none" stroke="#000" stroke-width="1.6"/><circle cx="249.6" cy="80.8" r="1.75" fill="#000"/><circle cx="255.8" cy="80.8" r="2.4" fill="#000"/><circle cx="262.1" cy="80.8" r="1.75" fill="#000"/><circle cx="288.6" cy="80.9" r="5.3" fill="none" stroke="#000" stroke-width="1.5"/><circle cx="288.6" cy="80.9" r="2.3" fill="#000"/><polygon points="70.4,135.9 75.4,146.4 72.9,144.5 69.5,161.8 66.7,143.9 64,144.8" fill="#fb1c10"/><polygon points="765,67.5 780.1,75 776.5,77 787.6,104.6 768,80 765.5,84" fill="#fb1c10"/><polygon points="849.7,67.5 861,70.7 857,72.8 868.6,85.7 854.5,75 852.3,78.2" fill="#fb1c10"/><polygon points="527.4,546.2 510.2,542.2 513.2,545.9 483.9,557.4 514.9,554 513.9,558" fill="#fb1c10"/></svg>
</body></html>
